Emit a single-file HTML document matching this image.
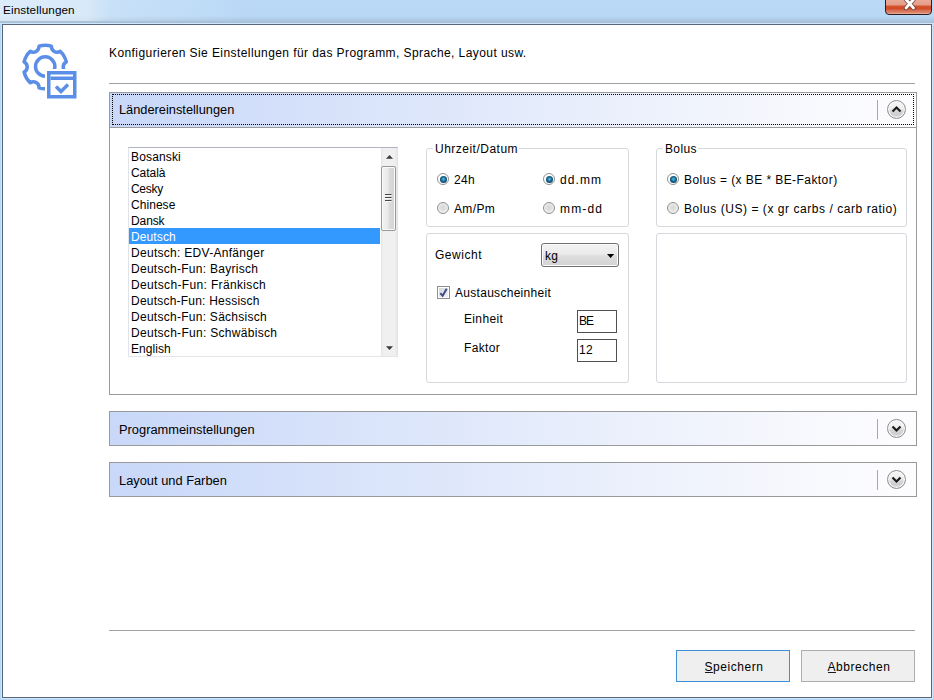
<!DOCTYPE html>
<html><head><meta charset="utf-8">
<style>
*{margin:0;padding:0;box-sizing:border-box}
html,body{width:934px;height:700px;overflow:hidden;background:#b7d6f6;font-family:"Liberation Sans",sans-serif;color:#000}
.a{position:absolute}
#title{left:0;top:0;width:934px;height:24px;background:linear-gradient(to bottom,#bad9f7 0px,#b9d8f6 16px,#abc6e0 21px,#a8c0d8 22.5px,#d2e2f2 23px,#d2e2f2 24px)}
#tl{left:0;top:0;width:260px;height:21px;background:linear-gradient(to right,rgba(236,244,251,.7) 0px,rgba(236,244,251,.6) 88px,rgba(236,244,251,.3) 110px,rgba(236,244,251,0) 250px)}
#ttext{left:3px;top:3px;font-size:11.7px;line-height:14px;color:#000;letter-spacing:.12px}
#close{left:885px;top:-5px;width:47px;height:20px;border:1px solid #2e1c1c;border-radius:0 0 4px 4px;background:linear-gradient(to bottom,#eeb4a4 0px,#e49c88 9px,#d4532f 10px,#d24a28 13px,#d46a4c 14px,#dc8a70 17px,#f0c4b4 18px)}
#win{left:2px;top:24px;width:930px;height:674px;border:1px solid #56677a;background:#fff;box-shadow:0 0 0 1px #d0e6fb}
.t{font-size:12px;letter-spacing:.35px;white-space:nowrap;line-height:17px}
.h{font-size:12.7px;white-space:nowrap;line-height:15px}
.sep{height:1px;background:#a0a0a0}
.acc{border:1px solid #9a9a9a;background:linear-gradient(to right,#c9d8f9 0%,#e2eafb 48%,#f7f8fd 85%,#fdfdff 100%)}
.vl{width:1px;background:#a8a8a8}
.circ{width:19px;height:19px;border-radius:50%;border:1px solid #8e8e8e;box-shadow:inset 0 0 0 1px #fafafa;background:linear-gradient(to bottom,#f6f6f6 0%,#eeeeee 45%,#d6d6d6 60%,#cdcdcd 80%,#e0e0e0 100%)}
.gb{border:1px solid #d5d9dd;border-radius:3px}
.radio{width:12px;height:12px;border-radius:50%;border:1px solid #8e9090;background:radial-gradient(circle at 50% 45%,#d6d6d6 0%,#e4e4e4 45%,#f4f4f4 75%,#fff 100%)}
.radio.on{background:#fff}
.radio.on::after{content:"";position:absolute;left:1.5px;top:1.5px;width:7px;height:7px;border-radius:50%;background:radial-gradient(circle at 50% 45%,#6cc8e8 0%,#1f78a4 35%,#0f4a6c 65%,#0a2c44 100%)}
.tb{border:1px solid #505050;background:#fff}
.li{position:absolute;left:0;width:252px;height:16px;padding-left:2px;line-height:18px}
.li.sel{background:#3399ff;color:#fff}
.btn{border:1px solid #adadad;background:#efefef;text-align:center}
</style></head><body>
<div id="title" class="a"></div>
<div id="tl" class="a"></div>
<div id="ttext" class="a">Einstellungen</div>
<div id="close" class="a"></div>
<svg class="a" style="left:885px;top:0px" width="47" height="15"><path d="M21 -0.5 L28.5 8 M28.5 -0.5 L21 8" stroke="#3a2424" stroke-width="4.4" stroke-linecap="round" opacity=".6"/><path d="M21 -0.5 L28.5 8 M28.5 -0.5 L21 8" stroke="#fff" stroke-width="2.7" stroke-linecap="round"/></svg>
<div id="win" class="a"></div>


<!-- icon -->
<svg class="a" style="left:15px;top:35px" width="70" height="70" viewBox="0 0 70 70">
<g fill="none" stroke="#5b8ee6" stroke-width="3.5" stroke-linejoin="round">
<path id="gear" d="M24.04 11.19 A21.7 21.7 0 0 1 36.36 11.19 A5.69 5.69 0 0 0 45.14 16.26 A21.7 21.7 0 0 1 51.30 26.93 A5.69 5.69 0 0 0 51.30 37.07 A21.7 21.7 0 0 1 45.14 47.74 A5.69 5.69 0 0 0 36.36 52.81 A21.7 21.7 0 0 1 24.04 52.81 A5.69 5.69 0 0 0 15.26 47.74 A21.7 21.7 0 0 1 9.10 37.07 A5.69 5.69 0 0 0 9.10 26.93 A21.7 21.7 0 0 1 15.26 16.26 A5.69 5.69 0 0 0 24.04 11.19 Z"/>
<circle cx="30.2" cy="31.5" r="9.7"/>
</g>
<rect x="30" y="34" width="34" height="32" fill="#fff"/>
<g fill="none" stroke="#5b8ee6" stroke-width="3.5">
<rect x="33.75" y="37.75" width="26" height="24"/>
<path d="M35.5 43.25 H58"/>
<path d="M41 51.5 L46 56.5 L53 49.5"/>
</g>
</svg>

<!-- header text -->
<div class="a t" style="left:109px;top:45px;letter-spacing:.42px">Konfigurieren Sie Einstellungen für das Programm, Sprache, Layout usw.</div>
<div class="a sep" style="left:109px;top:83px;width:806px"></div>

<!-- accordion 1 -->
<div class="a acc" style="left:109px;top:92px;width:808px;height:36px"></div>
<div class="a" style="left:112px;top:94px;width:802px;height:31px;border:1px dotted #000"></div>
<div class="a h" style="left:119px;top:102px;font-size:12.8px">Ländereinstellungen</div>
<div class="a vl" style="left:877px;top:100px;height:20px"></div>
<div class="a circ" style="left:887px;top:100px"></div>
<svg class="a" style="left:887px;top:100px" width="19" height="19"><path d="M5.5 11.5 L9.5 7.5 L13.5 11.5" stroke="#1a1a1a" stroke-width="2.2" fill="none"/></svg>
<div class="a" style="left:109px;top:127px;width:808px;height:268px;border:1px solid #9a9a9a;border-top:none"></div>

<!-- listbox -->
<div class="a" style="left:128px;top:147px;width:270px;height:210px;border:1px solid #b0b4bc;border-bottom-color:#e2e5ea;border-left-color:#e0e3e8;border-right-color:#e0e3e8"></div>
<div class="a" id="list" style="left:129px;top:148px;width:252px;height:208px;overflow:hidden">
<div class="li t" style="top:0px;letter-spacing:0.15px">Bosanski</div>
<div class="li t" style="top:16px;letter-spacing:-0.05px">Català</div>
<div class="li t" style="top:32px;letter-spacing:-0.3px">Cesky</div>
<div class="li t" style="top:48px;letter-spacing:0.05px">Chinese</div>
<div class="li t" style="top:64px;letter-spacing:-0.1px">Dansk</div>
<div class="li t sel" style="top:80px;width:251px;letter-spacing:0.12px">Deutsch</div>
<div class="li t" style="top:96px;letter-spacing:0.29px">Deutsch: EDV-Anfänger</div>
<div class="li t" style="top:112px;letter-spacing:0.28px">Deutsch-Fun: Bayrisch</div>
<div class="li t" style="top:128px;letter-spacing:0.35px">Deutsch-Fun: Fränkisch</div>
<div class="li t" style="top:144px;letter-spacing:0.22px">Deutsch-Fun: Hessisch</div>
<div class="li t" style="top:160px;letter-spacing:0.27px">Deutsch-Fun: Sächsisch</div>
<div class="li t" style="top:176px;letter-spacing:0.3px">Deutsch-Fun: Schwäbisch</div>
<div class="li t" style="top:192px;letter-spacing:0.05px">English</div>
</div>

<!-- groups -->
<div class="a gb" style="left:426px;top:148px;width:203px;height:79px"></div>
<div class="a t" style="left:433px;top:141px;background:#fff;padding:0 1px 0 2px;letter-spacing:.49px">Uhrzeit/Datum</div>
<div class="a gb" style="left:426px;top:233px;width:203px;height:150px"></div>
<div class="a gb" style="left:656px;top:148px;width:251px;height:79px"></div>
<div class="a t" style="left:663px;top:141px;background:#fff;padding:0 1px 0 2px">Bolus</div>
<div class="a gb" style="left:656px;top:233px;width:251px;height:150px"></div>


<!-- scrollbar -->
<div class="a" style="left:381px;top:148px;width:16px;height:208px;background:linear-gradient(to right,#e6e6e6,#f0f0f0 15%,#f0f0f0 85%,#e8e8e8)"></div>
<svg class="a" style="left:381px;top:148px" width="16" height="208">
<path d="M5 10.8 L8.5 7 L12 10.8 Z" fill="#3a3a3a"/>
<path d="M5 198.2 H12 L8.5 201.9 Z" fill="#3a3a3a"/>
</svg>
<div class="a" style="left:381px;top:166px;width:15px;height:65px;border:1px solid #989898;border-radius:2px;box-shadow:inset 0 0 0 1px #fafafa;background:linear-gradient(to right,#f2f2f2 0%,#eaeaea 45%,#dcdcdc 55%,#d2d2d2 100%)"></div>
<svg class="a" style="left:381px;top:166px" width="15" height="65">
<path d="M4 28.5 H10.5 M4 31.5 H10.5 M4 34.5 H10.5" stroke="#454545" stroke-width="1.2"/><path d="M4 29.5 H10.5 M4 32.5 H10.5 M4 35.5 H10.5" stroke="#f8f8f8" stroke-width="1"/>
</svg>

<!-- Uhrzeit radios -->
<div class="a radio on" style="left:437px;top:173px"></div>
<div class="a t" style="left:454px;top:172px">24h</div>
<div class="a radio on" style="left:543px;top:173px"></div>
<div class="a t" style="left:560px;top:172px;letter-spacing:1.1px">dd.mm</div>
<div class="a radio" style="left:437px;top:202px"></div>
<div class="a t" style="left:454px;top:201px">Am/Pm</div>
<div class="a radio" style="left:543px;top:202px"></div>
<div class="a t" style="left:560px;top:201px;letter-spacing:1.15px">mm-dd</div>

<!-- Gewicht -->
<div class="a t" style="left:435px;top:247px;letter-spacing:.53px">Gewicht</div>
<div class="a" style="left:541px;top:243px;width:78px;height:24px;border:1px solid #707070;border-radius:3px;box-shadow:inset 0 0 0 1px #fbfbfb;background:linear-gradient(to bottom,#f2f2f2 0%,#ebebeb 45%,#dddddd 55%,#d3d3d3 100%)"></div>
<div class="a t" style="left:545px;top:248px">kg</div>
<svg class="a" style="left:605px;top:252px" width="12" height="8"><path d="M2 2 H9.2 L5.6 6 Z" fill="#000"/></svg>
<div class="a" style="left:437px;top:286px;width:13px;height:13px;border:1px solid #8e8f8f;box-shadow:inset 0 0 0 1px #fff;background:linear-gradient(135deg,#d2d4d8,#f4f6f8)"></div>
<svg class="a" style="left:437px;top:286px" width="13" height="13"><path d="M3.3 7.2 L5.6 9.8 L9.7 2.8" stroke="#3e4a8c" stroke-width="2" fill="none"/></svg>
<div class="a t" style="left:455px;top:285px;letter-spacing:.29px">Austauscheinheit</div>
<div class="a t" style="left:464px;top:311px">Einheit</div>
<div class="a t" style="left:464px;top:340px">Faktor</div>
<div class="a tb" style="left:577px;top:310px;width:40px;height:23px"></div>
<div class="a t" style="left:579px;top:313px;letter-spacing:-1.1px">BE</div>
<div class="a tb" style="left:577px;top:339px;width:40px;height:23px"></div>
<div class="a t" style="left:579px;top:342px">12</div>

<!-- Bolus radios -->
<div class="a radio on" style="left:667px;top:173px"></div>
<div class="a t" style="left:684px;top:172px;letter-spacing:.43px">Bolus = (x BE * BE-Faktor)</div>
<div class="a radio" style="left:667px;top:202px"></div>
<div class="a t" style="left:684px;top:201px;letter-spacing:.55px">Bolus (US) = (x gr carbs / carb ratio)</div>

<!-- accordion 2,3 -->
<div class="a acc" style="left:109px;top:411px;width:808px;height:35px"></div>
<div class="a h" style="left:119px;top:422px;font-size:12.85px">Programmeinstellungen</div>
<div class="a vl" style="left:877px;top:419px;height:20px"></div>
<div class="a circ" style="left:887px;top:419px"></div>
<svg class="a" style="left:887px;top:419px" width="19" height="19"><path d="M5.5 7.5 L9.5 11.5 L13.5 7.5" stroke="#1a1a1a" stroke-width="2.2" fill="none"/></svg>
<div class="a acc" style="left:109px;top:462px;width:808px;height:35px"></div>
<div class="a h" style="left:119px;top:473px;font-size:12.85px">Layout und Farben</div>
<div class="a vl" style="left:877px;top:470px;height:20px"></div>
<div class="a circ" style="left:887px;top:470px"></div>
<svg class="a" style="left:887px;top:470px" width="19" height="19"><path d="M5.5 7.5 L9.5 11.5 L13.5 7.5" stroke="#1a1a1a" stroke-width="2.2" fill="none"/></svg>

<div class="a sep" style="left:109px;top:630px;width:806px"></div>
<div class="a btn t" style="left:676px;top:650px;width:114px;height:32px;border-color:#3d8fd8;line-height:32px;text-indent:2px;letter-spacing:.55px">Speichern</div>
<div class="a" style="left:705px;top:672px;width:8px;height:1px;background:#1a1a1a"></div>
<div class="a btn t" style="left:801px;top:650px;width:114px;height:32px;line-height:32px;text-indent:2px;letter-spacing:.54px">Abbrechen</div>
<div class="a" style="left:828px;top:672px;width:8px;height:1px;background:#1a1a1a"></div>
</body></html>
